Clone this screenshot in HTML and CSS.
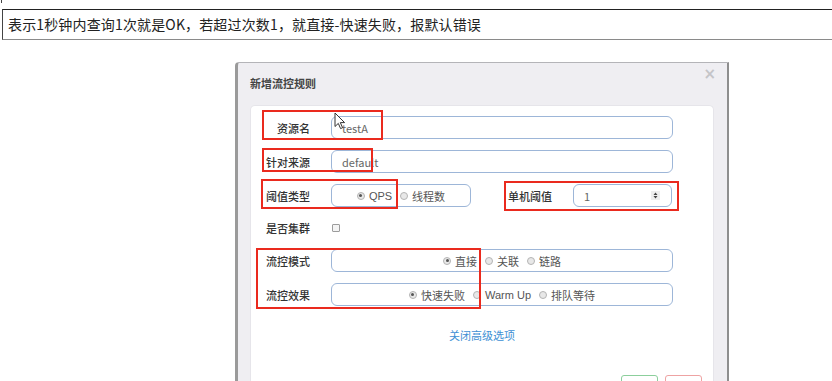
FILE: index.html
```html
<!DOCTYPE html>
<html lang="zh-CN">
<head>
<meta charset="utf-8">
<title>新增流控规则</title>
<link rel="stylesheet" href="styles.css">
</head>
<body>
<div class="tick"></div>
<div class="note">表示1秒钟内查询1次就是OK，若超过次数1，就直接-快速失败，报默认错误</div>
<div class="stage">
  <div class="dialog">
    <div class="dlg-head">
      <span class="title">新增流控规则</span>
      <span class="close">×</span>
    </div>
    <div class="panel">
      <div class="row">
        <span class="lbl">资源名</span>
        <div class="field wide">testA</div>
      </div>
      <div class="row">
        <span class="lbl">针对来源</span>
        <div class="field wide">default</div>
      </div>
      <div class="row">
        <span class="lbl">阈值类型</span>
        <div class="field radios short">
          <span class="opt"><i class="radio on"></i>QPS</span>
          <span class="opt"><i class="radio"></i>线程数</span>
        </div>
        <span class="lbl lbl2">单机阈值</span>
        <div class="field num">
          <span>1</span>
          <svg class="spin" width="9" height="9" viewBox="0 0 9 9"><rect width="9" height="9" fill="#eeeeee"/><path d="M4.5 1.5 L6.5 4 L2.5 4 Z M4.5 7.5 L6.5 5 L2.5 5 Z" fill="#444"/></svg>
        </div>
      </div>
      <div class="row row-short">
        <span class="lbl">是否集群</span>
        <i class="check"></i>
      </div>
      <div class="row">
        <span class="lbl">流控模式</span>
        <div class="field radios wide">
          <span class="opt"><i class="radio on"></i>直接</span>
          <span class="opt"><i class="radio"></i>关联</span>
          <span class="opt"><i class="radio"></i>链路</span>
        </div>
      </div>
      <div class="row">
        <span class="lbl">流控效果</span>
        <div class="field radios wide">
          <span class="opt"><i class="radio on"></i>快速失败</span>
          <span class="opt"><i class="radio"></i>Warm Up</span>
          <span class="opt"><i class="radio"></i>排队等待</span>
        </div>
      </div>
      <div class="link">关闭高级选项</div>
      <div class="footer">
        <span class="btn btn-ok"></span>
        <span class="btn btn-cancel"></span>
      </div>
    </div>
  </div>
</div>

<div class="mark m1"></div>
<div class="mark m2"></div>
<div class="mark m3"></div>
<div class="mark m4"></div>
<div class="mark m5"></div>
<svg class="cursor" width="12" height="18" viewBox="0 0 12 18"><path d="M1 1 L1 14.5 L4.3 11.4 L6.6 16.6 L8.6 15.7 L6.3 10.6 L10.6 10.6 Z" fill="#fff" stroke="#333" stroke-width="1" stroke-linejoin="round"/></svg>
</body>
</html>
```

FILE: styles.css
```css
html, body {
  margin: 0;
  padding: 0;
  background: #ffffff;
  height: 381px;
  overflow: hidden;
}
body {
  font-family: "Noto Sans CJK SC", "Noto Sans", sans-serif;
  position: relative;
}
.tick {
  width: 1px;
  height: 3px;
  margin-left: 1px;
  background: #444;
}
.note {
  margin: 6px 0 0 2px;
  border-top: 1px solid #222;
  border-left: 1px solid #444;
  border-bottom: 1px solid #8a8a8a;
  height: 29px;
  line-height: 29px;
  padding-left: 5px;
  font-size: 14px;
  letter-spacing: 0.15px;
  color: #222;
  white-space: nowrap;
}
.stage {
  margin-top: 22px;
}
.dialog {
  margin-left: 235px;
  width: 489px;
  height: 318px;
  overflow: hidden;
  background: #efeef2;
  border-left: 3px solid #9a9a9a;
  border-right: 2px solid #8e8e8e;
  border-top: 1px solid #b4b4b8;
  border-top-left-radius: 4px;
  display: flex;
  flex-direction: column;
}
.dlg-head {
  flex-shrink: 0;
  height: 42px;
  display: flex;
  justify-content: space-between;
  align-items: flex-start;
  padding-left: 12px;
  padding-right: 11px;
}
.title {
  margin-top: 13px;
  font-size: 11px;
  line-height: 14px;
  font-weight: 700;
  color: #444;
}
.close {
  margin-top: 4px;
  font-size: 15px;
  line-height: 14px;
  color: #c4c4c8;
  font-weight: 700;
  font-family: "DejaVu Sans", sans-serif;
}
.panel {
  flex: 1 0 auto;
  margin: 0 13px 0 12px;
  background: #ffffff;
  border: 1px solid #e6e5ea;
  border-bottom: none;
  border-radius: 5px 5px 0 0;
  padding-top: 10px;
}
.row {
  display: flex;
  align-items: center;
  height: 23px;
  margin-bottom: 11px;
}
.row-short {
  height: 20px;
}
.lbl {
  width: 59px;
  margin-right: 21px;
  text-align: right;
  font-size: 11px;
  font-weight: 500;
  color: #333;
  white-space: nowrap;
}
.lbl2 {
  width: auto;
  margin-left: 37px;
}
.field {
  box-sizing: border-box;
  height: 23px;
  border: 1px solid #9db6d8;
  border-radius: 6px;
  display: flex;
  align-items: center;
  font-size: 11px;
  color: #666;
  padding-left: 10px;
}
.wide {
  width: 342px;
}
.short {
  width: 140px;
}
.radios {
  justify-content: center;
  padding-left: 0;
  gap: 8px;
  color: #555;
}
.opt {
  display: inline-flex;
  align-items: center;
  white-space: nowrap;
  font-family: "Liberation Sans", "Noto Sans CJK SC", sans-serif;
}
.radio {
  box-sizing: border-box;
  width: 8px;
  height: 8px;
  border-radius: 50%;
  border: 1px solid #b4b4b4;
  background: #e8e8e8;
  margin-right: 4px;
  position: relative;
}
.radio.on::after {
  content: "";
  position: absolute;
  left: 1.5px;
  top: 1.5px;
  width: 3px;
  height: 3px;
  border-radius: 50%;
  background: #555;
}
.num {
  width: 99px;
  justify-content: space-between;
  padding-right: 11px;
}
.check {
  box-sizing: border-box;
  width: 8px;
  height: 8px;
  border: 1px solid #9c9c9c;
  border-radius: 1px;
  background: #f4f4f4;
  margin-left: 1px;
}
.link {
  margin-top: 22px;
  text-align: center;
  font-size: 11px;
  line-height: 14px;
  color: #3d8fd4;
}
.footer {
  margin-top: 33px;
  display: flex;
  justify-content: flex-end;
  gap: 7px;
  padding-right: 11px;
}
.btn {
  width: 37px;
  height: 20px;
  box-sizing: border-box;
  border-radius: 3px;
  background: #fff;
}
.btn-ok {
  border: 1px solid #8ccf9c;
}
.btn-cancel {
  border: 1px solid #eea3a3;
}
.mark {
  position: absolute;
  box-sizing: border-box;
  border: 2px solid #ea2a1e;
}
.m1 { left: 262px; top: 110px; width: 121px; height: 30px; }
.m2 { left: 262px; top: 148px; width: 111px; height: 24px; }
.m3 { left: 261px; top: 179px; width: 137px; height: 30px; }
.m4 { left: 504px; top: 181px; width: 175px; height: 30px; }
.m5 { left: 256px; top: 248px; width: 225px; height: 61px; }
.cursor {
  position: absolute;
  left: 334px;
  top: 112px;
}
```
